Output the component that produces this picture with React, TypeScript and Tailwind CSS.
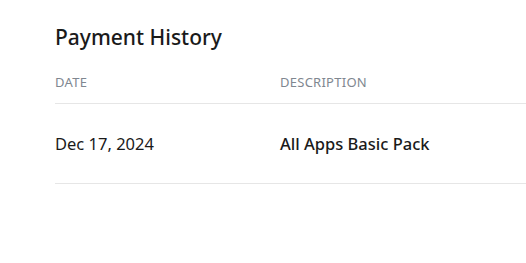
export default function App() {
  const payments = [{ date: "Dec 17, 2024", description: "All Apps Basic Pack" }];

  return (
    <div className="w-[526px] h-[263px] overflow-hidden bg-white font-['Noto_Sans',sans-serif] text-[#1a1a1a]">
      <div className="pl-[55px] pt-[22px] w-[900px]">
        <h2 className="text-[21px] leading-[30px] font-medium">Payment History</h2>

        <table className="mt-[21px] w-full border-collapse text-left">
          <thead>
            <tr className="border-b border-[#e6e6e6]">
              <th className="w-[225px] pb-[12px] text-[13px] leading-[18px] tracking-[0.02em] font-normal uppercase text-[#808790]">
                Date
              </th>
              <th className="pb-[12px] text-[13px] leading-[18px] tracking-[0.02em] font-normal uppercase text-[#808790]">
                Description
              </th>
            </tr>
          </thead>
          <tbody>
            {payments.map((p) => (
              <tr key={p.date} className="border-b border-[#e6e6e6]">
                <td className="py-[28px] text-[16.5px] leading-[23px]">{p.date}</td>
                <td className="py-[28px] text-[16.5px] leading-[23px] font-medium">{p.description}</td>
              </tr>
            ))}
          </tbody>
        </table>
      </div>
    </div>
  );
}
